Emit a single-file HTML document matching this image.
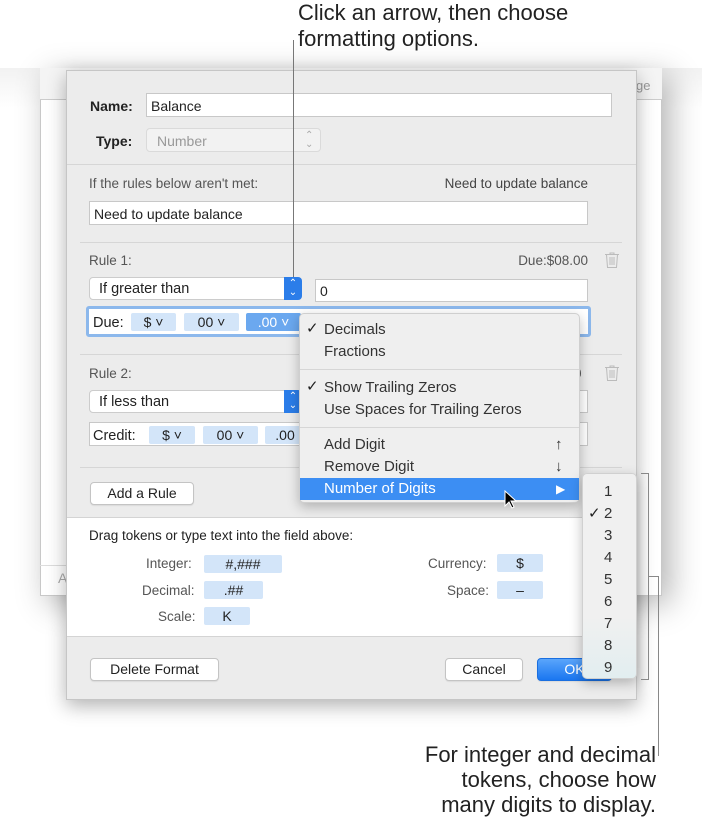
<!DOCTYPE html>
<html><head><style>
*{box-sizing:border-box;margin:0;padding:0}
body{width:702px;height:824px;background:#fff;position:relative;overflow:hidden;font-family:"Liberation Sans",sans-serif;font-size:14px;color:#222}
.a{position:absolute}
.t{position:absolute;white-space:nowrap;line-height:16px}
.fld{position:absolute;background:#fff;border:1px solid #c8c8c8}
.btn{position:absolute;background:#fff;border:1px solid #c4c4c4;border-radius:4px;text-align:center;line-height:21px;box-shadow:0 1px 1px rgba(0,0,0,.08)}
.tok{position:absolute;background:#d3e5f9;border-radius:2px;text-align:center;line-height:18px}
.sep{position:absolute;height:1px;background:#d6d6d6}
.mi{position:absolute;left:24px;line-height:22px;font-size:15px;color:#333}
.ck{position:absolute;left:6px;font-size:15px}
.call{position:absolute;font-size:22px;color:#222;line-height:26px;white-space:nowrap}
</style></head><body>
<div class="a" style="left:0;top:68px;width:702px;height:40px;background:linear-gradient(#f2f2f2,#fff)"></div>
<div class="a" style="left:40px;top:68px;width:622px;height:528px;background:#fff;border:1px solid #c8c8c8;box-shadow:8px 8px 30px rgba(0,0,0,.3)"></div>
<div class="a" style="left:40px;top:68px;width:622px;height:32px;background:#f4f4f4;border-bottom:1px solid #ccc"></div>
<div class="t" style="left:636px;top:78px;color:#999;font-size:13px">ge</div>
<div class="a" style="left:40px;top:565px;width:26px;height:1px;background:#ddd"></div>
<div class="t" style="left:58px;top:570px;color:#aaa">A</div>
<div class="a" style="left:66px;top:70px;width:571px;height:630px;background:#ececec;border:1px solid #c6c6c6;box-shadow:0 6px 18px rgba(0,0,0,.3)"></div>
<div class="t" style="left:90px;top:98px;font-weight:bold">Name:</div>
<div class="fld" style="left:146px;top:93px;width:466px;height:24px"></div>
<div class="t" style="left:151px;top:98px">Balance</div>
<div class="t" style="left:96px;top:133px;font-weight:bold">Type:</div>
<div class="a" style="left:146px;top:128px;width:175px;height:24px;background:#f2f2f2;border:1px solid #dadada;border-radius:4px"></div>
<div class="t" style="left:157px;top:133px;color:#999">Number</div>
<div class="t" style="left:305px;top:131px;color:#aaa;font-size:10px;line-height:9px">⌃<br>⌄</div>
<div class="sep" style="left:67px;top:164px;width:569px"></div>
<div class="t" style="left:89px;top:176px;color:#555;font-size:13.5px">If the rules below aren't met:</div>
<div class="t" style="right:114px;top:176px;color:#444;font-size:13.5px">Need to update balance</div>
<div class="fld" style="left:89px;top:201px;width:499px;height:24px"></div>
<div class="t" style="left:94px;top:206px">Need to update balance</div>
<div class="sep" style="left:80px;top:242px;width:542px"></div>
<div class="t" style="left:89px;top:253px;color:#555;font-size:13.5px">Rule 1:</div>
<div class="t" style="right:114px;top:253px;color:#555;font-size:13.5px">Due:$08.00</div>
<svg class="a" style="left:603px;top:251px" width="18" height="18"><g fill="none" stroke="#bbb" stroke-width="1"><path d="M2 3.5h14M7 3.5V2h4v1.5M3.5 3.5l1 13h9l1-13M7 6v8M9 6v8M11 6v8"/></g></svg>
<div class="a" style="left:89px;top:277px;width:213px;height:23px;background:#fff;border:1px solid #ccc;border-radius:4px"></div>
<div class="t" style="left:99px;top:281px;font-size:14.5px">If greater than</div>
<div class="a" style="left:284px;top:277px;width:18px;height:23px;background:#2b7de9;border-radius:0 4px 4px 0;color:#fff;font-size:10px;line-height:9px;text-align:center;padding-top:2px">⌃<br>⌄</div>
<div class="fld" style="left:315px;top:279px;width:273px;height:23px"></div>
<div class="t" style="left:320px;top:283px">0</div>
<div class="a" style="left:86px;top:306px;width:505px;height:31px;border:3px solid #8cb8ec;border-radius:3px;background:#fff"></div>
<div class="t" style="left:93px;top:315px;font-size:14.5px">Due:</div>
<div class="tok" style="left:131px;top:313px;width:45px">$ ˅</div>
<div class="tok" style="left:184px;top:313px;width:55px">00 ˅</div>
<div class="tok" style="left:246px;top:313px;width:55px;background:#6ba8ef;color:#fff">.00 ˅</div>
<div class="sep" style="left:80px;top:354px;width:542px"></div>
<div class="t" style="left:89px;top:366px;color:#555;font-size:13.5px">Rule 2:</div>
<div class="t" style="left:574px;top:366px;color:#555;font-size:13.5px">0</div>
<svg class="a" style="left:603px;top:364px" width="18" height="18"><g fill="none" stroke="#bbb" stroke-width="1"><path d="M2 3.5h14M7 3.5V2h4v1.5M3.5 3.5l1 13h9l1-13M7 6v8M9 6v8M11 6v8"/></g></svg>
<div class="a" style="left:89px;top:390px;width:213px;height:23px;background:#fff;border:1px solid #ccc;border-radius:4px"></div>
<div class="t" style="left:99px;top:394px;font-size:14.5px">If less than</div>
<div class="a" style="left:284px;top:390px;width:18px;height:23px;background:#2b7de9;border-radius:0 4px 4px 0;color:#fff;font-size:10px;line-height:9px;text-align:center;padding-top:2px">⌃<br>⌄</div>
<div class="fld" style="left:89px;top:422px;width:499px;height:24px"></div>
<div class="fld" style="left:560px;top:390px;width:28px;height:23px"></div>
<div class="t" style="left:93px;top:428px;font-size:14.5px">Credit:</div>
<div class="tok" style="left:149px;top:426px;width:46px">$ ˅</div>
<div class="tok" style="left:203px;top:426px;width:55px">00 ˅</div>
<div class="tok" style="left:265px;top:426px;width:40px">.00</div>
<div class="sep" style="left:80px;top:467px;width:542px"></div>
<div class="btn" style="left:90px;top:482px;width:104px;height:23px">Add a Rule</div>
<div class="a" style="left:67px;top:517px;width:569px;height:120px;background:#fff;border-top:1px solid #d4d4d4;border-bottom:1px solid #d4d4d4"></div>
<div class="t" style="left:89px;top:528px;font-size:13.5px">Drag tokens or type text into the field above:</div>
<div class="t" style="left:146px;top:556px;color:#555;font-size:13.5px">Integer:</div>
<div class="tok" style="left:204px;top:555px;width:78px">#,###</div>
<div class="t" style="left:142px;top:583px;color:#555;font-size:13.5px">Decimal:</div>
<div class="tok" style="left:204px;top:581px;width:59px">.##</div>
<div class="t" style="left:158px;top:609px;color:#555;font-size:13.5px">Scale:</div>
<div class="tok" style="left:204px;top:607px;width:46px">K</div>
<div class="t" style="left:428px;top:556px;color:#555;font-size:13.5px">Currency:</div>
<div class="tok" style="left:497px;top:554px;width:46px">$</div>
<div class="t" style="left:447px;top:583px;color:#555;font-size:13.5px">Space:</div>
<div class="tok" style="left:497px;top:581px;width:46px">–</div>
<div class="btn" style="left:90px;top:658px;width:129px;height:23px">Delete Format</div>
<div class="btn" style="left:445px;top:658px;width:78px;height:23px">Cancel</div>
<div class="btn" style="left:537px;top:658px;width:75px;height:23px;background:linear-gradient(#5aa5fb,#1a76f0);border-color:#1a6fe0;color:#fff">OK</div>
<div class="a" style="left:299px;top:313px;width:281px;height:190px;background:#efefef;border:1px solid #cfcfcf;border-radius:5px;box-shadow:0 4px 12px rgba(0,0,0,.25)">
<div class="ck" style="top:5px">✓</div><div class="mi" style="top:5px">Decimals</div>
<div class="mi" style="top:27px">Fractions</div>
<div class="sep" style="left:0;top:55px;width:279px"></div>
<div class="ck" style="top:63px">✓</div><div class="mi" style="top:63px">Show Trailing Zeros</div>
<div class="mi" style="top:85px">Use Spaces for Trailing Zeros</div>
<div class="sep" style="left:0;top:113px;width:279px"></div>
<div class="mi" style="top:120px">Add Digit</div><div class="mi" style="top:120px;left:255px">↑</div>
<div class="mi" style="top:142px">Remove Digit</div><div class="mi" style="top:142px;left:255px">↓</div>
<div class="a" style="left:0;top:164px;width:279px;height:22px;background:#3c8ef3"></div>
<div class="mi" style="top:164px;color:#fff">Number of Digits</div><div class="mi" style="top:164px;left:256px;color:#fff;font-size:12px">▶</div>
</div>
<svg class="a" style="left:504px;top:490px" width="14" height="22"><path d="M1 1v15l4-4 3 6 2-1-3-6h5z" fill="#000" stroke="#fff" stroke-width="1"/></svg>
<div class="a" style="left:582px;top:473px;width:55px;height:206px;background:linear-gradient(#f0f0f0 70%,#e2eef0);border:1px solid #d0d0d0;border-radius:5px;box-shadow:0 4px 12px rgba(0,0,0,.25)"></div>
<div class="t" style="left:604px;top:481px;font-size:15px;line-height:22px;color:#333">1<br>2<br>3<br>4<br>5<br>6<br>7<br>8<br>9</div>
<div class="t" style="left:588px;top:503px;font-size:15px;line-height:22px">✓</div>
<div class="call" style="left:298px;top:0">Click an arrow, then choose</div>
<div class="call" style="left:298px;top:26px">formatting options.</div>
<div class="a" style="left:293px;top:40px;width:1px;height:237px;background:#777"></div>
<div class="a" style="left:641px;top:473px;width:8px;height:207px;border:1px solid #888;border-left:none"></div>
<div class="a" style="left:649px;top:576px;width:10px;height:180px;border-top:1px solid #888;border-right:1px solid #888"></div>
<div class="call" style="right:46px;top:742px;text-align:right;line-height:25px">For integer and decimal<br>tokens, choose how<br>many digits to display.</div>
</body></html>
